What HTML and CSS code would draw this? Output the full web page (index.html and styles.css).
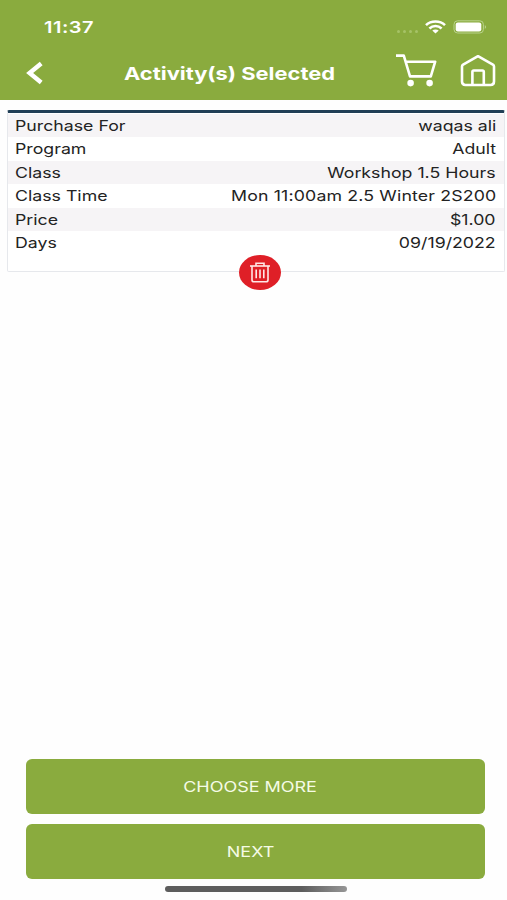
FILE: index.html
```html
<!DOCTYPE html>
<html lang="en">
<head>
  <meta charset="UTF-8" />
  <meta name="viewport" content="width=device-width, initial-scale=1.0"/>
  <title>Activity(s) Selected</title>
  <link rel="stylesheet" href="styles.css">
</head>
<body>
  <header>
    <div class="status-bar">
      <span class="time wide">11:37</span>
      <div class="status-icons">
        <div class="signal"><i></i><i></i><i></i><i></i></div>
        <svg class="wifi" viewBox="0 0 21 14">
          <g fill="none" stroke="#fff" stroke-width="2.6">
            <path d="M1 5.1 C6 .2 15 .2 20 5.1"/>
            <path d="M4.4 8.5 C8 5.2 13 5.2 16.6 8.5"/>
          </g>
          <path d="M7.3 10.6 C9 9.2 12 9.2 13.7 10.6 L10.5 13.5 Z" fill="#fff"/>
        </svg>
        <svg class="battery" viewBox="0 0 34 14">
          <rect x="1" y=".8" width="29.4" height="12.2" rx="3.6" fill="none" stroke="#b9d38c" stroke-width="1"/>
          <rect x="2.7" y="2.4" width="25.6" height="9" rx="2.2" fill="#fff"/>
          <path d="M31.8 5 Q34.4 6.9 31.8 8.9 Z" fill="#b9d38c"/>
        </svg>
      </div>
    </div>
    <nav>
      <svg class="back" viewBox="0 0 18 24">
        <path d="M15.2 2.5 L3.6 12 L15.2 21.5" fill="none" stroke="#fff" stroke-width="4.4"/>
      </svg>
      <h1><span class="wide">Activity(s) Selected</span></h1>
      <svg class="cart" viewBox="0 0 42 34">
        <path d="M1 2.6 H8.8 L15 23.4 H35.8 L40.2 8.7 H11" fill="none" stroke="#fff" stroke-width="2.6" stroke-linejoin="round"/>
        <circle cx="15.6" cy="30.1" r="3.3" fill="#fff"/>
        <circle cx="34.6" cy="30.1" r="3.3" fill="#fff"/>
      </svg>
      <svg class="home" viewBox="0 0 36 34">
        <g fill="none" stroke="#fff" stroke-width="2.6" stroke-linejoin="round">
          <path d="M2 12.6 Q2 11.4 3.1 10.7 L18 2.2 L32.9 10.7 Q34 11.4 34 12.6 V27.6 Q34 31 30.6 31 H5.4 Q2 31 2 27.6 Z"/>
          <path d="M12.4 31 V17.8 Q12.4 16.5 13.8 16.5 H22.4 Q23.8 16.5 23.8 17.8 V31"/>
        </g>
      </svg>
    </nav>
  </header>

  <main>
    <div class="card">
      <div class="row"><span class="wide">Purchase For</span><span class="wide value">waqas ali</span></div>
      <div class="row"><span class="wide">Program</span><span class="wide value">Adult</span></div>
      <div class="row"><span class="wide">Class</span><span class="wide value">Workshop 1.5 Hours</span></div>
      <div class="row"><span class="wide">Class Time</span><span class="wide value class-time">Mon 11:00am 2.5 Winter 2S200</span></div>
      <div class="row"><span class="wide">Price</span><span class="wide value">$1.00</span></div>
      <div class="row"><span class="wide">Days</span><span class="wide value">09/19/2022</span></div>
      <button class="delete" aria-label="Delete">
        <svg viewBox="0 0 22 21">
          <g fill="none" stroke="#ffe6e6" stroke-width="1.6">
            <path d="M1 4 H21"/>
            <path d="M7 4 V1.2 H15 V4"/>
            <path d="M3 4 V18 Q3 19.8 5 19.8 H17 Q19 19.8 19 18 V4"/>
            <path d="M7.2 7.5 V16.2 M11 7.5 V16.2 M14.8 7.5 V16.2"/>
          </g>
        </svg>
      </button>
    </div>
  </main>

  <footer>
    <button class="btn"><span class="wide">CHOOSE MORE</span></button>
    <button class="btn"><span class="wide">NEXT</span></button>
    <div class="home-bar"></div>
  </footer>
</body>
</html>
```
FILE: styles.css
```css
:root {
  --green: #8aab3e;
  --navy: #213f56;
  --red: #df1f27;
  --stripe: #f6f4f6;
  --text: #232323;
}

* {
  box-sizing: border-box;
  margin: 0;
  padding: 0;
}

body {
  display: flex;
  flex-direction: column;
  height: 100vh;
  overflow: hidden;
  background: #fefefe;
  color: var(--text);
  font-family: Inter, 'Liberation Sans', sans-serif;
}

svg {
  display: block;
  flex: none;
}

/* extended letterforms */
.wide {
  display: inline-block;
  white-space: nowrap;
  transform: scaleX(1.215);
  transform-origin: left center;
}

header {
  height: 100px;
  background: var(--green);
  color: #fff;
}

.status-bar {
  display: flex;
  justify-content: space-between;
  height: 54px;
  padding: 18px 20px 0 44px;
}

.time {
  font-size: 16.5px;
  font-weight: 600;
  line-height: 19px;
  letter-spacing: 0.4px;
}

.status-icons {
  display: flex;
  align-items: flex-start;
  padding-top: 2px;
}

.signal {
  display: flex;
  gap: 3px;
  margin: 10px 7px 0 0;
}

.signal i {
  width: 3px;
  height: 3px;
  border-radius: 50%;
  background: #a6c267;
}

.wifi {
  width: 21px;
  height: 14px;
  margin-right: 7px;
}

.battery {
  width: 34px;
  height: 14px;
}

nav {
  display: flex;
  align-items: flex-start;
  padding: 0 11px 0 26px;
}

.back {
  width: 18px;
  height: 24px;
  margin-top: 7px;
}

h1 {
  flex: 1;
  padding-left: 80px;
  font-size: 18px;
  font-weight: 700;
  line-height: 39px;
}

.cart {
  width: 42px;
  height: 34px;
  margin: -1px 23px 0 0;
}

.home {
  width: 36px;
  height: 34px;
}

main {
  flex: 1;
  padding: 10px 2px 0 7px;
}

.card {
  position: relative;
  height: 162px;
  padding-top: 1px;
  border: 1px solid #e6e8ec;
  border-top: 3px solid var(--navy);
  border-radius: 2px;
  background: #fff;
}

.row {
  display: flex;
  justify-content: space-between;
  height: 23.4px;
  padding: 0 8px 0 7px;
  font-size: 14.6px;
  line-height: 24px;
}

.row:nth-child(odd) {
  background: var(--stripe);
}

.value {
  transform-origin: right center;
}

.class-time {
  letter-spacing: 0.12px;
}

.delete {
  position: absolute;
  left: 50%;
  bottom: -19px;
  display: flex;
  align-items: center;
  justify-content: center;
  width: 42px;
  height: 35px;
  margin-left: -17px;
  border: none;
  border-radius: 50%;
  background: var(--red);
}

.delete svg {
  width: 22px;
  height: 21px;
}

footer {
  display: flex;
  flex-direction: column;
  gap: 10px;
  padding: 0 22px 8px 26px;
}

.btn {
  height: 55px;
  padding-right: 10px;
  border: none;
  border-radius: 6px;
  background: var(--green);
  color: #f5fbe6;
  font-family: inherit;
  font-size: 14.8px;
}

.btn .wide {
  transform-origin: center;
}

.home-bar {
  width: 182px;
  height: 6px;
  margin: -3px 0 0 139px;
  border-radius: 3px;
  background: linear-gradient(90deg, #5d5d5d 75%, #969696);
}
```
